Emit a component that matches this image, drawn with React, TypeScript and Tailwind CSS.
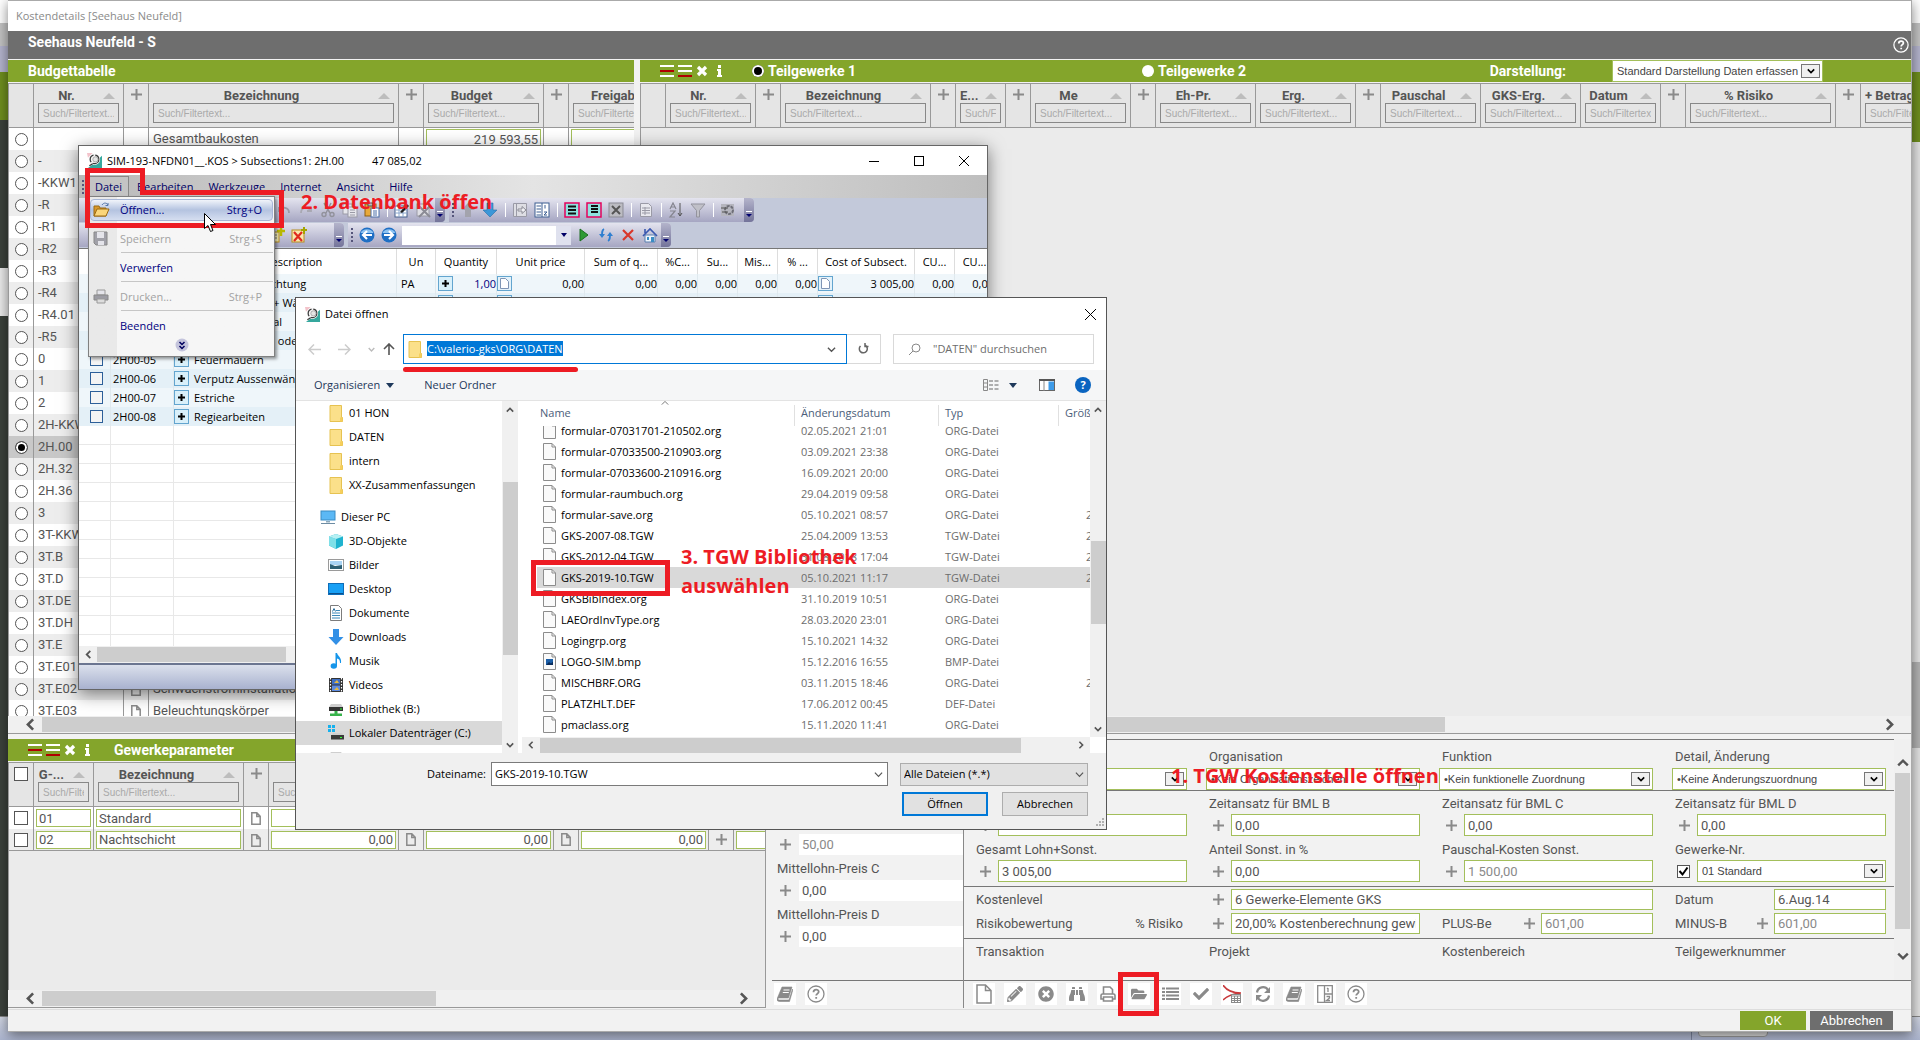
import type { ReactNode } from "react"
import { FaBinoculars, FaCheck, FaFolderOpen, FaPencilAlt, FaTimesCircle } from "react-icons/fa"

type Column = {
    label?: string,
    width: string,
    kind: "select" | "text" | "plus"
}

type FileRow = {
    name: string,
    date: string,
    type: string,
    size?: string
}

const din = "font-[Roboto,sans-serif]"
const segoe = "font-['Open_Sans',sans-serif]"

const budgetColumns: Column[] = [
    { width: "w-[25px]", kind: "select" },
    { label: "Nr.", width: "w-[90px]", kind: "text" },
    { width: "w-[25px]", kind: "plus" },
    { label: "Bezeichnung", width: "w-[250px]", kind: "text" },
    { width: "w-[25px]", kind: "plus" },
    { label: "Budget", width: "w-[120px]", kind: "text" },
    { width: "w-[25px]", kind: "plus" },
    { label: "Freigabe", width: "w-[120px]", kind: "text" },
]

const tradeColumns: Column[] = [
    { width: "w-[25px]", kind: "select" },
    { label: "Nr.", width: "w-[90px]", kind: "text" },
    { width: "w-[25px]", kind: "plus" },
    { label: "Bezeichnung", width: "w-[150px]", kind: "text" },
    { width: "w-[25px]", kind: "plus" },
    { label: "E...", width: "w-[50px]", kind: "text" },
    { width: "w-[25px]", kind: "plus" },
    { label: "Me", width: "w-[100px]", kind: "text" },
    { width: "w-[25px]", kind: "plus" },
    { label: "Eh-Pr.", width: "w-[100px]", kind: "text" },
    { label: "Erg.", width: "w-[100px]", kind: "text" },
    { width: "w-[25px]", kind: "plus" },
    { label: "Pauschal", width: "w-[100px]", kind: "text" },
    { label: "GKS-Erg.", width: "w-[100px]", kind: "text" },
    { label: "Datum", width: "w-[80px]", kind: "text" },
    { width: "w-[25px]", kind: "plus" },
    { label: "% Risiko", width: "w-[150px]", kind: "text" },
    { width: "w-[25px]", kind: "plus" },
    { label: "+ Betrag", width: "w-[80px]", kind: "text" },
]

const paramColumns: Column[] = [
    { width: "w-[25px]", kind: "select" },
    { label: "G-...", width: "w-[60px]", kind: "text" },
    { label: "Bezeichnung", width: "w-[150px]", kind: "text" },
    { width: "w-[25px]", kind: "plus" },
    { label: "%", width: "w-[130px]", kind: "text" },
    { width: "w-[25px]", kind: "plus" },
    { label: "%", width: "w-[130px]", kind: "text" },
    { width: "w-[25px]", kind: "plus" },
    { label: "%", width: "w-[130px]", kind: "text" },
    { width: "w-[25px]", kind: "plus" },
    { label: "%", width: "w-[130px]", kind: "text" },
]

const budgetCodes = ["", "-", "-KKW1", "-R", "-R1", "-R2", "-R3", "-R4", "-R4.01", "-R5", "0", "1", "2", "2H-KKW", "2H.00", "2H.32", "2H.36", "3", "3T-KKW", "3T.B", "3T.D", "3T.DE", "3T.DH", "3T.E", "3T.E01", "3T.E02", "3T.E03"]
const budgetNames: Record<string, string> = {
    "": "Gesamtbaukosten",
    "3T.E02": "Schwachstrominstallation",
    "3T.E03": "Beleuchtungskörper",
}

const subsections = [
    ["2H00-01", "Baustelleneinrichtung"],
    ["2H00-02", "Mauern, Beton + Wände"],
    ["2H00-03", "Regie u. Personal"],
    ["2H00-04", "Mauerwerk neu oder"],
    ["2H00-05", "Feuermauern"],
    ["2H00-06", "Verputz Aussenwände"],
    ["2H00-07", "Estriche"],
    ["2H00-08", "Regiearbeiten"],
]

const subsectionColumns = [
    ["", "w-[32px]"], ["", "w-[63px]"], ["Description", "w-[223px]"], ["Un", "w-[39px]"],
    ["Quantity", "w-[61px]"], ["Unit price", "w-[88px]"], ["Sum of q...", "w-[73px]"], ["%C...", "w-[40px]"],
    ["Su...", "w-[40px]"], ["Mis...", "w-[40px]"], ["% ...", "w-[40px]"], ["Cost of Subsect.", "w-[97px]"],
    ["CU...", "w-[40px]"], ["CU...", "w-[40px]"],
]

const files: FileRow[] = [
    { name: "formular-07031701-210502.org", date: "02.05.2021 21:01", type: "ORG-Datei" },
    { name: "formular-07033500-210903.org", date: "03.09.2021 23:38", type: "ORG-Datei" },
    { name: "formular-07033600-210916.org", date: "16.09.2021 20:00", type: "ORG-Datei" },
    { name: "formular-raumbuch.org", date: "29.04.2019 09:58", type: "ORG-Datei" },
    { name: "formular-save.org", date: "05.10.2021 08:57", type: "ORG-Datei", size: "2" },
    { name: "GKS-2007-08.TGW", date: "25.04.2009 13:53", type: "TGW-Datei", size: "2" },
    { name: "GKS-2012-04.TGW", date: "31.08.2018 17:04", type: "TGW-Datei", size: "2" },
    { name: "GKS-2019-10.TGW", date: "05.10.2021 11:17", type: "TGW-Datei", size: "2" },
    { name: "GKSBibIndex.org", date: "31.10.2019 10:51", type: "ORG-Datei" },
    { name: "LAEOrdInvType.org", date: "28.03.2020 23:01", type: "ORG-Datei" },
    { name: "Logingrp.org", date: "15.10.2021 14:32", type: "ORG-Datei" },
    { name: "LOGO-SIM.bmp", date: "15.12.2016 16:55", type: "BMP-Datei" },
    { name: "MISCHBRF.ORG", date: "03.11.2015 18:46", type: "ORG-Datei", size: "2" },
    { name: "PLATZHLT.DEF", date: "17.06.2012 00:45", type: "DEF-Datei" },
    { name: "pmaclass.org", date: "15.11.2020 11:41", type: "ORG-Datei" },
]

/* ---------- small drawings ---------- */

function Plus() {
    return (
        <svg width="11" height="11" viewBox="0 0 11 11" className="shrink-0">
            <path d="M5.5 0v11M0 5.5h11" stroke="#8a8a8a" strokeWidth="2" />
        </svg>
    )
}

function PageOutline() {
    return (
        <svg width="10" height="13" viewBox="0 0 10 13" className="inline-block">
            <path d="M.8.8h5l3.4 3.6v7.8H.8zM5.8.8v3.6h3.4" fill="none" stroke="#8a8a8a" strokeWidth="1.5" />
        </svg>
    )
}

function SortMark() {
    return (
        <svg width="12" height="6" viewBox="0 0 12 6" className="shrink-0"><path d="M0 6l6-6 6 6z" fill="#bdbdbd" /></svg>
    )
}

function Chevron({ dir, size = 10, color = "#555", weight = 2 }: { dir: "left" | "right" | "up" | "down", size?: number, color?: string, weight?: number }) {
    const d = { left: "M7 1L3 5l4 4", right: "M3 1l4 4-4 4", up: "M1 7l4-4 4 4", down: "M1 3l4 4 4-4" }[dir]
    return (
        <svg width={size} height={size} viewBox="0 0 10 10" className="shrink-0">
            <path d={d} fill="none" stroke={color} strokeWidth={weight} />
        </svg>
    )
}

function AppIcon() {
    return (
        <svg width="15" height="15" viewBox="0 0 16 16" className="shrink-0">
            <path d="M16 3v13H1l4-3z" fill="#35a79d" />
            <path d="M0 0h6L1 5z" fill="#f3c3cb" />
            <circle cx="8" cy="6.800" r="6" fill="#f4f4f4" />
            <circle cx="8" cy="6.800" r="4.600" fill="none" stroke="#3a3a3a" strokeWidth="1.300" strokeDasharray="9 2" />
            <circle cx="9" cy="6.800" r="2.800" fill="#e4e4e4" stroke="#999" strokeWidth=".8" />
            <path d="M2.500 13.500L6 11.500" stroke="#333" strokeWidth="1.300" />
        </svg>
    )
}

function FileIcon({ image }: { image?: boolean }) {
    return (
        <svg width="13" height="17" viewBox="0 0 13 17" className="shrink-0">
            <path d="M.5.5h8.5l3.5 3.5v12.5H.5z" fill="#fafafa" stroke="#8c8c8c" />
            <path d="M9 .5v3.5h3.5" fill="none" stroke="#8c8c8c" />
            {image && <path d="M3 6h7v6H3z" fill="#1c5fa8" />}
            {image && <path d="M3 12l3-3 2 1.500 2-2V12z" fill="#0b2d5c" />}
        </svg>
    )
}

function FolderIcon() {
    return (
        <svg width="14" height="17" viewBox="0 0 14 17" className="shrink-0">
            <path d="M1 .5h11.500v12h1v4H1z" fill="#fbe08a" stroke="#e6c251" />
            <path d="M11 12.500h2.500v4H11z" fill="#f6cf5c" />
        </svg>
    )
}

const treeIcons: Record<string, ReactNode> = {
    pc: <><rect x="1" y="2" width="14" height="9" fill="#5bb8f5" stroke="#3a8cc4" /><path d="M6 12h4v1.500H6z" fill="#8fa9bb" /><path d="M1 14.500h14" stroke="#6d8ca3" /></>,
    cube: <><path d="M8 1l7 2.500v9L8 16l-7-3.500v-9z" fill="#1fb3cf" /><path d="M1 3.500L8 6v10l-7-3.500z" fill="#7fe0e8" /><path d="M1 3.500L8 1l7 2.500L8 6z" fill="#b6f0f3" /></>,
    image: <><rect x=".5" y="2.500" width="15" height="11" fill="#fff" stroke="#9a9a9a" /><path d="M2 4h12v4H2z" fill="#a9d3f3" /><path d="M2 7l5 2 7-1v4H2z" fill="#2d5f73" /></>,
    desktop: <><rect x=".5" y="2.500" width="15" height="11" fill="#18a0f5" stroke="#0f6db8" /><path d="M1 12.500h14" stroke="#0b4f8c" /></>,
    doc: <><path d="M2.500.5h8l3 3v12h-11z" fill="#fff" stroke="#7c7c7c" /><path d="M4 8h8M4 10.500h8M4 13h8M8 5.500h4" stroke="#3c88b8" /><path d="M4.500 6.500l1.500-3 1.500 3" stroke="#2a6e9c" fill="none" /></>,
    download: <path d="M5 0h6v8h4.500L8 16 .5 8H5z" fill="#3290e6" />,
    music: <><path d="M7.500 0h1.500c.5 3 5 4.500 4 10h-1c0-3-1-4-3-4.500V13H7.500z" fill="#1595ea" /><ellipse cx="5.800" cy="13" rx="3.200" ry="2.800" fill="#1595ea" /></>,
    video: <><rect x="1" y="1" width="14" height="14" fill="#333" /><path d="M4 2h8v5.500H4z" fill="#3f6fc4" /><path d="M4 8.500h8V14H4z" fill="#5d8be0" /><path d="M6 6l3-3 2 3zM6 13l3-3 2 3z" fill="#e7b83c" /><path d="M2.500 1v14M13.500 1v14" stroke="#fff" strokeDasharray="1.500 1.500" strokeWidth="1.200" /></>,
    net: <><path d="M3 3h10l2 3H1z" fill="#cfcfcf" /><rect x="1" y="6" width="14" height="4" fill="#333" /><path d="M12 8h2" stroke="#3f3" /><path d="M6.500 10h3v2.500h4.500V15H2v-2.500h4.500z" fill="#37b34a" /></>,
    disk: <><path d="M0 0h3v3H0zM4 0h3v3H4zM0 4h3v3H0zM4 4h3v3H4z" fill="#16b1ee" /><path d="M5 8h9l2 3H3z" fill="#cfcfcf" /><rect x="3" y="10" width="13" height="4.500" fill="#3a3a3a" /><path d="M12 12.500h2" stroke="#3f3" /></>,
}

function TreeIcon({ name }: { name: string }) {
    if (name === "folder") return <FolderIcon />
    return <svg width="16" height="16" viewBox="0 0 16 16" className="shrink-0">{treeIcons[name]}</svg>
}

const toolIcons: Record<string, ReactNode> = {
    undo: <path d="M3 5v4h4M3 9c3-5 10-4 10 2" fill="none" stroke="#9a9aa6" strokeWidth="1.800" />,
    redo: <path d="M13 5v4H9M13 9C10 4 3 5 3 11" fill="none" stroke="#a8a8b2" strokeWidth="1.800" />,
    cut: <><path d="M4 1l6 10M11 1L6 11" stroke="#92929c" strokeWidth="1.500" /><circle cx="4" cy="12.500" r="2" fill="none" stroke="#92929c" strokeWidth="1.400" /><circle cx="12" cy="12.500" r="2" fill="none" stroke="#92929c" strokeWidth="1.400" /></>,
    copy: <><rect x="1" y="2" width="9" height="10" fill="#e6e6ec" stroke="#9a9aa6" /><rect x="6" y="5" width="9" height="10" fill="#e6e6ec" stroke="#9a9aa6" /><path d="M8 8h5M8 10.500h5M8 13h5" stroke="#9a9aa6" /></>,
    paste: <><rect x="1" y="2" width="11" height="12" fill="#e8a93a" stroke="#8d5f13" /><rect x="4" y="1" width="5" height="3" fill="#b9b9c4" stroke="#555" /><rect x="7" y="6" width="8" height="9" fill="#fff" stroke="#4a6ea8" /><path d="M9 9h4M9 11h4M9 13h4" stroke="#4a6ea8" /></>,
    edit: <><rect x="1" y="4" width="12" height="11" fill="#fff" stroke="#46618d" /><path d="M1 8h12M1 11h12M5 4v11M9 4v11" stroke="#8aa6cc" /><path d="M6 10l7-8 2 2-7 7z" fill="#222" /></>,
    gridx: <><rect x="1" y="2" width="12" height="12" fill="#dedee4" stroke="#9a9aa6" /><path d="M3 4l11 11M14 4L3 15" stroke="#8b8b95" strokeWidth="2" /></>,
    up: <path d="M8 1l7 7h-4v7H5V8H1z" fill="#a3a3ad" />,
    down: <path d="M8 15L1 8h4V1h6v7h4z" fill="#3b97d8" stroke="#2b6fa8" strokeWidth=".6" />,
    jump: <><path d="M1.500 1.500h13v13h-13z" fill="#dedee4" stroke="#9a9aa6" /><path d="M4.500 2v12" stroke="#9a9aa6" /><path d="M6 7h4V4.500L14 8l-4 3.500V9H6z" fill="#f1f1f5" stroke="#8b8b95" /></>,
    list12: <><rect x="1" y="1" width="14" height="14" fill="#fff" stroke="#3c5f92" /><path d="M8 1v14" stroke="#3c5f92" /><path d="M2.500 4H7M2.500 7H7M2.500 10H7M2.500 13H7M11 3v3.500M10 10h3l-3 3h3" stroke="#3c5f92" fill="none" /></>,
    pinkTop: <><rect x="1" y="1" width="14" height="14" fill="#8fe3df" stroke="#e6005c" strokeWidth="1.500" /><path d="M4 4.500h8M4 8h8M4 11.500h8" stroke="#111" strokeWidth="1.800" /></>,
    pinkBottom: <><rect x="1" y="1" width="14" height="14" fill="#8fe3df" stroke="#e6005c" strokeWidth="1.500" /><path d="M5 4h7M5 7h7M5 10h7" stroke="#111" strokeWidth="1.800" /></>,
    boxx: <><rect x="1" y="1" width="14" height="14" fill="#bcbcc2" stroke="#8b8b95" /><path d="M4 4l8 8M12 4l-8 8" stroke="#555" strokeWidth="2" /></>,
    sheet: <><path d="M2.500 1.500h8l3 3v10h-11z" fill="#e8e8ee" stroke="#9a9aa6" /><path d="M4 6h8M4 8.500h8M4 11h8M7 5v8" stroke="#9a9aa6" /></>,
    sort: <><path d="M2 7l3-6 3 6M3 5h4M2 9h5l-5 6h5" fill="none" stroke="#85858f" strokeWidth="1.200" /><path d="M12 1v13M10 11l2 3 2-3" stroke="#555" fill="none" /></>,
    funnel: <path d="M1 2h14L9.500 8.500V15h-3V8.500z" fill="#c0c0c8" stroke="#93939d" />,
    gear: <><rect x="1" y="2" width="13" height="12" fill="#b5b5be" /><circle cx="9" cy="8" r="4" fill="none" stroke="#6f6f79" strokeWidth="2" strokeDasharray="3 1" /><path d="M1 6h7M2 10h6" stroke="#555" /></>,
    docplus: <><rect x="1" y="5" width="9" height="10" fill="#f7f0b8" stroke="#b78d1c" /><path d="M3 8h5M3 11h5" stroke="#777" /><path d="M12 0v9M8 4h8" stroke="#b8b800" strokeWidth="2.500" /></>,
    xplus: <><rect x="1" y="3" width="12" height="12" fill="#fbe6b0" stroke="#b78d1c" /><path d="M3 5l8 9M11 5l-8 9" stroke="#e02a1e" strokeWidth="2.200" /><path d="M13 0v7M10 3h6" stroke="#a5a500" strokeWidth="2" /></>,
    back: <><circle cx="8" cy="8" r="7.500" fill="#1f6fc4" /><path d="M1.500 6a7 6 0 0113 0z" fill="#8cc3f2" /><path d="M13 8H4M8 4L4 8l4 4" fill="none" stroke="#fff" strokeWidth="2.200" /></>,
    forward: <><circle cx="8" cy="8" r="7.500" fill="#1f6fc4" /><path d="M1.500 6a7 6 0 0113 0z" fill="#8cc3f2" /><path d="M3 8h9M8 4l4 4-4 4" fill="none" stroke="#fff" strokeWidth="2.200" /></>,
    play: <path d="M4 2l8 6-8 6z" fill="#2f9a35" stroke="#1d6e22" />,
    refresh: <><path d="M6 2C4 3 4 5 4 9M10 14c2-1 2-3 2-7" fill="none" stroke="#2f7fd0" strokeWidth="1.800" /><path d="M1 7h6l-3 4zM9 9h6l-3-4z" fill="#2f7fd0" /></>,
    redx: <path d="M3 3l10 10M13 3L3 13" stroke="#d9372b" strokeWidth="2.200" />,
    home: <><path d="M3 8h10v7H3z" fill="#eef4fb" stroke="#5b7fae" /><path d="M1 9l7-7 7 7M3 2v4" fill="none" stroke="#3a58b0" strokeWidth="1.600" /><path d="M5 10h2v3H5zM9 10h3v5H9z" fill="#3a8cc4" /></>,
}

function ToolButton({ name }: { name: string }) {
    if (name === "|") {
        return <span className="flex w-2 justify-center"><span className="h-3.5 w-px bg-white" /></span>
    }
    return (
        <button aria-label={name} className="flex h-5 w-[22px] items-center justify-center">
            <svg width="16" height="16" viewBox="0 0 16 16">{toolIcons[name]}</svg>
        </button>
    )
}

function Grip() {
    return (
        <svg width="8" height="16" viewBox="0 0 8 16" className="shrink-0">
            <path d="M4 1v14" stroke="#55557a" strokeWidth="2" strokeDasharray="2 2" />
        </svg>
    )
}

function ToolStrip({ width, children, className = "" }: { width: string, children: ReactNode, className?: string }) {
    return (
        <div className={`flex h-6 overflow-hidden rounded-r bg-gradient-to-b from-[#e4e4ef] to-[#a6a6c2] ${width}`}>
            <div className={`flex min-w-0 flex-1 items-center ${className}`}><Grip />{children}</div>
            <div className="flex w-2.5 shrink-0 items-end justify-center bg-gradient-to-b from-[#b4b4cb] to-[#74749a] pb-1">
                <svg width="6" height="7" viewBox="0 0 6 7"><path d="M0 .5h6" stroke="#fff" /><path d="M0 3h6L3 6z" fill="#00006e" /></svg>
            </div>
        </div>
    )
}

/* ---------- cost details ---------- */

function HeaderRow({ columns, checkbox }: { columns: Column[], checkbox?: boolean }) {
    return (
        <tr className="h-[45px] bg-[#e5e5e5]">
            {columns.map((col, i) => (
                <th key={i} className={`overflow-hidden border-y border-r border-[#999] p-0 align-top font-bold ${col.width}`}>
                    {col.kind === "select" && checkbox && (
                        <input type="checkbox" aria-label="Alle" className="m-1 size-3.5 appearance-none border border-[#555] bg-white" />
                    )}
                    {col.kind === "plus" && (
                        <button aria-label="Spalte" className="mt-[5px] p-0"><Plus /></button>
                    )}
                    {col.kind === "text" && (
                        <div className="flex flex-col px-1">
                            <div className="flex h-[19px] items-center gap-2 pt-1 pr-1">
                                <span className="min-w-0 flex-1 text-center text-[13px] leading-4 whitespace-nowrap text-[#555]">{col.label}</span>
                                <SortMark />
                            </div>
                            <input aria-label={`Filter ${col.label}`} placeholder="Such/Filtertext..." className="h-5 w-full border border-[#888] bg-transparent px-1 font-['Liberation_Sans',sans-serif] text-[10px] font-normal placeholder:text-[#aaa]" />
                        </div>
                    )}
                </th>
            ))}
        </tr>
    )
}

function RowMarks() {
    return (
        <div className="flex items-center gap-1 pr-4">
            <svg width="14" height="12" viewBox="0 0 14 12"><path d="M0 1h14M0 11h14" stroke="#fff" strokeWidth="2" /><path d="M0 6h14" stroke="#b00000" strokeWidth="2" /></svg>
            <svg width="14" height="12" viewBox="0 0 14 12"><path d="M0 1h14M0 6h14" stroke="#fff" strokeWidth="2" /><path d="M0 11h14" stroke="#b00000" strokeWidth="2" /></svg>
            <svg width="12" height="12" viewBox="0 0 12 12"><path d="M2 2l8 8M10 2l-8 8" stroke="#fff" strokeWidth="3.200" /></svg>
            <svg width="14" height="12" viewBox="0 0 14 12"><path d="M6 0h3v3H6zM5 4h4v6h1v2H5v-2h1V6H5z" fill="#fff" /></svg>
        </div>
    )
}

function ScrollX({ thumb }: { thumb: string }) {
    return (
        <div className="flex h-[17px] shrink-0 items-center bg-[#f0f0f0]">
            <div className="flex w-[34px] justify-end pr-[5px]"><Chevron dir="left" size={13} /></div>
            <div className="flex h-[15px] flex-1"><div className={`bg-[#cdcdcd] ${thumb}`} /></div>
            <div className="flex w-8 justify-start pl-1"><Chevron dir="right" size={13} /></div>
        </div>
    )
}

function Dropdown({ value, label, className = "" }: { value: string, label: string, className?: string }) {
    return (
        <div className={`relative ${className}`}>
            <select aria-label={label} className="h-[22px] w-full appearance-none border border-[#a3bf5b] bg-white pl-1 pr-5 font-['Liberation_Sans',sans-serif] text-[11px] font-normal text-[#444]">
                <option>{value}</option>
            </select>
            <span className="pointer-events-none absolute top-1 right-[3px] flex h-3.5 w-[19px] items-center justify-center border border-[#777] bg-[#f0f0f0]">
                <Chevron dir="down" size={8} color="#000" />
            </span>
        </div>
    )
}

function Field({ label, value, muted }: { label: string, value: string, muted?: boolean }) {
    return (
        <label className="flex flex-col">
            <span className="h-[21px] pl-[3px] leading-[21px]">{label}</span>
            <span className="flex items-center">
                <span className="flex w-[25px] justify-center"><Plus /></span>
                <input defaultValue={value} className={`h-[22px] min-w-0 flex-1 border border-[#a3bf5b] bg-white px-[3px] ${muted ? "text-[#8a8a8a]" : ""}`} />
            </span>
        </label>
    )
}

function BudgetTable() {
    return (
        <div className="flex w-[626px] shrink-0 flex-col border-b border-[#999]">
            <h2 className="flex h-[23px] shrink-0 items-center border-b border-[#f2f2f2] bg-[#84a52b] pl-5 text-sm font-bold text-white">Budgettabelle</h2>
            <div className="min-h-0 flex-1 overflow-hidden border-l border-[#999]">
                <table className="w-0 table-fixed border-separate border-spacing-0">
                    <thead><HeaderRow columns={budgetColumns} /></thead>
                    <tbody>
                        {budgetCodes.map((code, i) => {
                            const selected = code === "2H.00"
                            return (
                                <tr key={code} className={`h-[22px] text-[#555] ${selected ? "bg-[#c8c8c8]" : i % 2 ? "bg-[#ededed]" : "bg-white"}`}>
                                    <td className="border-r border-[#999] p-0 text-center">
                                        <input type="radio" name="budget" aria-label={code || "Gesamt"} defaultChecked={selected} className="mx-auto block size-[13px] appearance-none rounded-full border border-[#555] bg-white checked:border-[#555] checked:bg-black checked:shadow-[inset_0_0_0_2px_white]" />
                                    </td>
                                    <td className="overflow-hidden border-r border-[#999] p-0 pl-1 whitespace-nowrap">{code}</td>
                                    <td className="border-r border-[#999] p-0 text-center">{i > 0 && <PageOutline />}</td>
                                    <td className="overflow-hidden border-r border-[#999] p-0 pl-1 whitespace-nowrap">{budgetNames[code]}</td>
                                    <td className="border-r border-[#999] p-0" />
                                    <td className="border-r border-[#999] p-0 px-0.5">
                                        {i === 0 && <input aria-label="Budget" defaultValue="219 593,55" className="block h-5 w-full border border-[#a3bf5b] bg-white px-0.5 text-right" />}
                                    </td>
                                    <td className="border-r border-[#999] p-0" />
                                    <td className="p-0 px-0.5">
                                        {i === 0 && <input aria-label="Freigabe" className="block h-5 w-full border border-[#a3bf5b] bg-white" />}
                                    </td>
                                </tr>
                            )
                        })}
                    </tbody>
                </table>
            </div>
            <ScrollX thumb="w-4/5" />
        </div>
    )
}

function TradeTable() {
    return (
        <div className="flex min-w-0 flex-1 flex-col border-b border-[#999]">
            <div className="flex h-[23px] shrink-0 items-center border-b border-[#f2f2f2] bg-[#84a52b] pl-5 text-sm font-bold text-white">
                <RowMarks />
                <label className="flex w-[390px] items-center gap-1">
                    <input type="radio" name="trade" defaultChecked className="ml-2.5 size-3 appearance-none rounded-full bg-white checked:bg-black checked:shadow-[inset_0_0_0_2px_white]" />
                    Teilgewerke 1
                </label>
                <label className="flex items-center gap-1">
                    <input type="radio" name="trade" className="ml-2.5 size-3 appearance-none rounded-full bg-white" />
                    Teilgewerke 2
                </label>
                <span className="ml-auto">Darstellung:</span>
                <Dropdown label="Darstellung" value="Standard Darstellung Daten erfassen" className="mr-[88px] ml-[46px] w-[211px]" />
            </div>
            <div className="min-h-0 flex-1 overflow-hidden border-l border-[#999] bg-[#ebebeb]">
                <table className="w-0 table-fixed border-separate border-spacing-0">
                    <thead><HeaderRow columns={tradeColumns} /></thead>
                </table>
            </div>
            <ScrollX thumb="w-[64%]" />
        </div>
    )
}

function ParamTable() {
    const cell = "block h-[18px] w-full border border-[#a3bf5b] bg-white px-0.5"
    return (
        <div className="flex w-[758px] shrink-0 flex-col border-r border-b border-[#999]">
            <div className="flex h-[23px] shrink-0 items-center border-b border-[#f2f2f2] bg-[#84a52b] pl-5 text-sm font-bold text-white">
                <RowMarks />
                <h2 className="pl-1">Gewerkeparameter</h2>
            </div>
            <div className="min-h-0 flex-1 overflow-hidden border-l border-[#999] bg-[#ebebeb]">
                <table className="w-0 table-fixed border-separate border-spacing-0">
                    <thead><HeaderRow columns={paramColumns} checkbox /></thead>
                    <tbody>
                        {[["01", "Standard"], ["02", "Nachtschicht"]].map(([nr, name], i) => (
                            <tr key={nr} className={`h-[22px] *:border-r *:border-[#999] *:p-0 ${i ? "bg-[#ededed] *:border-b" : "bg-white"}`}>
                                <td>
                                    <input type="checkbox" aria-label={nr} className="mx-auto block size-3.5 appearance-none border border-[#555] bg-white" />
                                </td>
                                <td><div className="px-0.5"><input aria-label="Nummer" defaultValue={nr} className={cell} /></div></td>
                                <td><div className="px-0.5"><input aria-label="Bezeichnung" defaultValue={name} className={cell} /></div></td>
                                <td className="text-center"><PageOutline /></td>
                                {["A", "B", "C", "D"].map((k) => [
                                    <td key={k}><div className="px-0.5"><input aria-label={k} defaultValue="0,00" className={`${cell} text-right`} /></div></td>,
                                    k !== "D" && <td key={k + "+"} className="text-center"><span className="flex justify-center">{k === "C" ? <Plus /> : <PageOutline />}</span></td>,
                                ])}
                            </tr>
                        ))}
                    </tbody>
                </table>
            </div>
            <ScrollX thumb="w-[57%]" />
        </div>
    )
}

const formIcons: Record<string, ReactNode> = {
    Neu: <svg width="16" height="20" viewBox="0 0 16 20"><path d="M1 1h8.500L15 6.500V19H1zM9.500 1v5.500H15" fill="none" stroke="#8a8a8a" strokeWidth="1.500" /></svg>,
    Bearbeiten: <FaPencilAlt />,
    Entfernen: <FaTimesCircle />,
    Suchen: <FaBinoculars />,
    Drucken: <svg width="16" height="16" viewBox="0 0 16 16"><path d="M3.500 8V1h6.500l2.500 2.500V8M3 13H1V9.500Q1 8 2.500 8h11Q15 8 15 9.500V13h-2M3.500 11h9v4h-9z" fill="none" stroke="#8a8a8a" strokeWidth="1.600" /></svg>,
    Öffnen: <FaFolderOpen />,
    Liste: <svg width="17" height="14" viewBox="0 0 17 14"><path d="M0 1.500h3M4 1.500h13M0 5h3M4 5h13M0 8.500h3M4 8.500h13M0 12h3M4 12h13" stroke="#8a8a8a" strokeWidth="2.200" /></svg>,
    Übernehmen: <FaCheck />,
    Berechnen: <svg width="18" height="18" viewBox="0 0 18 18"><path d="M0 0c4 6 9 8 18 8M0 15c4-4 8-6 18-7" fill="none" stroke="#c8393c" strokeWidth="1.600" /><rect x="8.500" y="9.500" width="9" height="8" fill="#fff" stroke="#8a8a8a" /><path d="M9 11h8M9 13.500h8M9 15.500h8M11.500 11v6M14.500 11v6" stroke="#8a8a8a" /></svg>,
    Aktualisieren: <svg width="16" height="16" viewBox="0 0 16 16"><path d="M2 6.500A6 6 0 0113 4M14 9.500A6 6 0 013 12" fill="none" stroke="#8a8a8a" strokeWidth="2.200" /><path d="M15 1v6H9zM1 15V9h6z" fill="#8a8a8a" /></svg>,
    Buch: <svg width="16" height="16" viewBox="0 0 16 16"><path d="M5 1h10l-3.500 11H2q-1.500 0-1 1.200.3.800 1.500.8H12l3.500-11v2L12.500 15.500H2.500Q0 15.500 0 13z" fill="#8a8a8a" stroke="#8a8a8a" strokeWidth=".6" /><path d="M6.500 4h6M5.800 6.500h6" stroke="#fff" strokeWidth="1.100" /></svg>,
    Nummern: <svg width="16" height="18" viewBox="0 0 16 18"><path d="M.7.7h14.600v16.600H.7zM7.500.7v16.600M7.500 9h8M11 3v4M10 3.700l1-.7M9.500 11.500h3V13l-3 2.500h3.500" fill="none" stroke="#8a8a8a" strokeWidth="1.300" /></svg>,
    Hilfe: <svg width="18" height="18" viewBox="0 0 18 18"><circle cx="9" cy="9" r="8" fill="none" stroke="#8a8a8a" strokeWidth="1.300" /><path d="M6.500 7.200c0-3.500 5.200-3.400 5.200-.4 0 1.700-2.500 1.900-2.500 3.800M9.200 12v1.800" fill="none" stroke="#8a8a8a" strokeWidth="1.800" /></svg>,
}

function IconBar({ names, className }: { names: string[], className: string }) {
    return (
        <div className={`flex h-[28px] shrink-0 items-center gap-[9px] border-t border-[#777] pb-0.5 ${className}`}>
            {names.map((name) => (
                <button key={name} aria-label={name} className="flex size-[22px] items-center justify-center bg-white text-base text-[#8a8a8a]">{formIcons[name]}</button>
            ))}
        </div>
    )
}

function WagePanel() {
    return (
        <div className="flex w-[198px] shrink-0 flex-col border-r border-[#888] pl-1.5">
            <div className="flex flex-1 flex-col pt-[26px]">
                {[["A", "50,00"], ["B", "50,00"], ["C", "0,00"], ["D", "0,00"]].map(([k, value]) => (
                    <label key={k} className="flex h-[46px] flex-col">
                        <span className="pl-[5px] leading-[23px]">Mittellohn-Preis {k}</span>
                        <span className="flex items-center">
                            <span className="flex w-[27px] justify-center"><Plus /></span>
                            <input defaultValue={value} className={`h-[21px] min-w-0 flex-1 bg-white px-[3px] ${k < "C" ? "text-[#8a8a8a]" : ""}`} />
                        </span>
                    </label>
                ))}
            </div>
            <IconBar className="pl-0.5" names={["Buch", "Hilfe"]} />
        </div>
    )
}

function CostForm() {
    const box = "h-[21px] min-w-0 border border-[#a3bf5b] bg-white px-[3px]"
    return (
        <div className="flex min-w-0 flex-1 flex-col">
            <div className="flex flex-1">
                <div className="min-w-0 flex-1 border-t border-[#777]">
                    <div className="grid grid-cols-4 gap-x-[19px] border-b border-[#777] pt-1.5 pr-2 pl-[9px]">
                        {[["Standort", "•Kein Standort"], ["Organisation", "•Kein Organisationszeichen"], ["Funktion", "•Kein funktionelle Zuordnung"], ["Detail, Änderung", "•Keine Änderungszuordnung"]].map(([label, value]) => (
                            <div key={label}>
                                <div className="pl-[3px] leading-[22px]">{label}</div>
                                <Dropdown label={label} value={value} />
                            </div>
                        ))}
                    </div>
                    <div className="grid grid-cols-4 gap-x-[19px] gap-y-[3px] border-b border-[#777] pt-0.5 pr-2 pb-1 pl-[9px]">
                        <Field label="Zeitansatz für BML A" value="" />
                        <Field label="Zeitansatz für BML B" value="0,00" />
                        <Field label="Zeitansatz für BML C" value="0,00" />
                        <Field label="Zeitansatz für BML D" value="0,00" />
                        <Field label="Gesamt Lohn+Sonst." value="3 005,00" />
                        <Field label="Anteil Sonst. in %" value="0,00" />
                        <Field label="Pauschal-Kosten Sonst." value="1 500,00" muted />
                        <div>
                            <div className="pl-[3px] leading-[21px]">Gewerke-Nr.</div>
                            <div className="flex items-center">
                                <span className="flex w-[25px] pl-[5px]">
                                    <input type="checkbox" aria-label="Gewerke" defaultChecked className="size-[13px] appearance-none border border-[#555] bg-white" />
                                    <svg width="13" height="13" viewBox="0 0 13 13" className="pointer-events-none -ml-[13px]"><path d="M2.500 6l3 3.500 5-7" fill="none" stroke="#000" strokeWidth="2" /></svg>
                                </span>
                                <Dropdown label="Gewerke-Nr." value="01 Standard" className="flex-1" />
                            </div>
                        </div>
                    </div>
                    <div className="grid grid-cols-4 items-center gap-x-[19px] gap-y-[3px] border-b border-[#777] pt-0.5 pr-2 pb-1 pl-[9px]">
                        <label htmlFor="level" className="pl-[3px]">Kostenlevel</label>
                        <div className="col-span-2 flex items-center">
                            <span className="flex w-[25px] justify-center"><Plus /></span>
                            <input id="level" defaultValue="6 Gewerke-Elemente GKS" className={`${box} flex-1`} />
                        </div>
                        <label className="flex items-center justify-between pl-[3px]">Datum<input defaultValue="6.Aug.14" className={`${box} w-[112px]`} /></label>
                        <div className="flex justify-between pl-[3px]"><span>Risikobewertung</span><span className="pr-1">% Risiko</span></div>
                        <div className="flex items-center">
                            <span className="flex w-[25px] justify-center"><Plus /></span>
                            <input aria-label="Risikobewertung" defaultValue="20,00% Kostenberechnung gewichtet" className={`${box} flex-1`} />
                        </div>
                        <label className="flex items-center pl-[3px]"><span className="flex-1">PLUS-Be</span><Plus /><input defaultValue="601,00" className={`${box} ml-1.5 w-[112px] text-[#8a8a8a]`} /></label>
                        <label className="flex items-center pl-[3px]"><span className="flex-1">MINUS-B</span><Plus /><input defaultValue="601,00" className={`${box} ml-1.5 w-[112px] text-[#8a8a8a]`} /></label>
                    </div>
                    <div className="grid grid-cols-4 gap-x-[19px] pr-2 pl-[9px] leading-[26px]">
                        {["Transaktion", "Projekt", "Kostenbereich", "Teilgewerknummer"].map((label) => <span key={label} className="pl-[3px]">{label}</span>)}
                    </div>
                </div>
                <div className="flex w-[17px] shrink-0 flex-col items-center bg-[#f0f0f0] py-3.5">
                    <div className="flex h-5 items-center"><Chevron dir="up" size={12} /></div>
                    <div className="w-[15px] flex-1"><div className="h-[90%] bg-[#cdcdcd]" /></div>
                    <div className="flex h-5 items-center"><Chevron dir="down" size={12} /></div>
                </div>
            </div>
            <IconBar className="pl-[9px]" names={["Neu", "Bearbeiten", "Entfernen", "Suchen", "Drucken", "Öffnen", "Liste", "Übernehmen", "Berechnen", "Aktualisieren", "Buch", "Nummern", "Hilfe"]} />
        </div>
    )
}

function CostDetails() {
    return (
        <section className={`absolute inset-x-2 top-0 bottom-2 flex flex-col border-t border-r border-b border-[#aaa] bg-[#f2f2f2] text-[13px] leading-4 text-[#555] shadow-[0_3px_12px_rgba(0,0,0,0.5)] ${din}`}>
            <div className={`flex h-[30px] shrink-0 items-center bg-white pl-2 text-[11px] text-[#8a8a8a] ${segoe}`}>Kostendetails [Seehaus Neufeld]</div>
            <header className="mb-px flex h-7 shrink-0 items-center justify-between bg-[#6e6e6e] pr-0.5 pl-5 text-white">
                <h1 className="pb-1.5 text-sm font-bold">Seehaus Neufeld - S</h1>
                <svg width="16" height="16" viewBox="0 0 18 18"><circle cx="9" cy="9" r="8" fill="none" stroke="#fff" strokeWidth="1.400" /><path d="M6.500 7.200c0-3.500 5.200-3.400 5.200-.4 0 1.700-2.500 1.900-2.500 3.800M9.200 12v1.800" fill="none" stroke="#fff" strokeWidth="2" /></svg>
            </header>
            <div className="flex min-h-0 flex-1 gap-1.5">
                <BudgetTable />
                <TradeTable />
            </div>
            <div className="mt-[5px] mb-px flex h-[269px] shrink-0">
                <ParamTable />
                <WagePanel />
                <CostForm />
            </div>
            <footer className="flex h-[22px] shrink-0 items-center justify-end gap-1 border-t border-[#ddd] pr-[18px] text-white">
                <button className="h-[19px] w-[66px] bg-[#84a52b]">OK</button>
                <button className="h-[19px] w-[83px] bg-[#6e6e6e]">Abbrechen</button>
            </footer>
        </section>
    )
}

/* ---------- subsections window ---------- */

function FileMenu() {
    const items = [["Öffnen...", "Strg+O"], ["Speichern", "Strg+S"], ["Verwerfen", ""], ["Drucken...", "Strg+P"], ["Beenden", ""]]
    return (
        <div className="absolute top-[50px] left-[9px] flex w-[187px] flex-col gap-1 border border-[#808080] bg-gradient-to-r from-[#e9e9e9] from-15% to-[#f6f6f6] to-15% px-px pb-1 shadow-[2px_2px_3px_rgba(0,0,0,0.4)]">
            {items.map(([label, keys], i) => {
                const disabled = i === 1 || i === 3
                return (
                    <button key={label} className={`relative flex h-[25px] items-center text-left ${disabled ? "text-[#a3a3a3]" : "text-[#000080]"}`}>
                        <span className={`flex h-[22px] w-full items-center rounded border pr-2.5 ${i === 0 ? "border-[#a7b6d6] bg-gradient-to-b from-[#f1f4fa] via-[#b4c3e0] to-[#d5def0]" : "border-transparent"}`}>
                            <span className="flex w-[29px] shrink-0 pl-0.5">
                                {i === 0 && <svg width="17" height="16" viewBox="0 0 17 16"><path d="M1 4h5l1 2h6v8H1z" fill="#d9982b" stroke="#9b6a12" /><path d="M4 7h12l-3 7H1z" fill="#fbd67a" stroke="#9b6a12" /><path d="M9 3c2-3 5-2 6 0m0-2v2.500h-2.500" fill="none" stroke="#5577aa" /></svg>}
                                {i === 1 && <svg width="15" height="15" viewBox="0 0 15 15"><path d="M1 1h13v13H3l-2-2z" fill="#a0a0a8" stroke="#888" /><path d="M4 1h7v6H4zM5 10h6v4H5z" fill="#e4e4ea" /></svg>}
                                {i === 3 && <svg width="16" height="15" viewBox="0 0 16 15"><path d="M4 1h8v5H4z" fill="#e4e4ea" stroke="#999" /><path d="M1 6h14v5H1z" fill="#9c9ca4" stroke="#888" /><path d="M4 10h8v4H4z" fill="#ddd" stroke="#999" /></svg>}
                            </span>
                            <span className="flex-1">{label}</span>
                            <span>{keys}</span>
                        </span>
                        {i > 0 && i < 4 && <span className="absolute right-0 -bottom-0.5 left-[31px] h-px bg-[#c6c6c6]" />}
                    </button>
                )
            })}
            <div className="-mt-1 flex h-3.5 justify-center">
                <svg width="14" height="14" viewBox="0 0 14 14"><circle cx="7" cy="7" r="6.500" fill="#c4c4dc" /><path d="M4.500 4L7 6.500 9.500 4M4.500 8L7 10.500 9.500 8" fill="none" stroke="#00005e" strokeWidth="1.500" /></svg>
            </div>
        </div>
    )
}

function CellPlus() {
    return (
        <svg width="15" height="15" viewBox="0 0 15 15" className="shrink-0"><rect x=".5" y=".5" width="14" height="14" fill="#d9f0fa" stroke="#63a5cf" /><path d="M7.500 4v7M4 7.500h7" stroke="#000" strokeWidth="2" /></svg>
    )
}

function CellPage() {
    return (
        <svg width="15" height="15" viewBox="0 0 15 15" className="shrink-0"><rect x=".5" y=".5" width="14" height="14" fill="#e4f2fa" stroke="#63a5cf" /><path d="M3.500 2.500h5l3 3v7h-8z" fill="#fff" stroke="#7f95b5" /></svg>
    )
}

function SubsectionWindow() {
    return (
        <section className={`absolute top-[145px] left-[78px] isolate flex h-[545px] w-[910px] flex-col border border-[#666] bg-[#c3c9da] text-[11px] leading-4 text-black shadow-[0_4px_16px_rgba(0,0,0,0.5)] ${segoe}`}>
            <div className="flex h-[29px] shrink-0 items-center bg-white pl-2">
                <AppIcon />
                <span className="pl-[5px]">SIM-193-NFDN01__.KOS &gt; Subsections1: 2H.00</span>
                <span className="pl-7">47 085,02</span>
                <div className="ml-auto flex items-center gap-[35px] pr-[18px]">
                    <svg width="10" height="10"><path d="M0 5.500h10" stroke="#000" /></svg>
                    <svg width="10" height="10"><rect x=".5" y=".5" width="9" height="9" fill="none" stroke="#000" /></svg>
                    <svg width="10" height="10"><path d="M0 0l10 10M10 0L0 10" stroke="#000" /></svg>
                </div>
            </div>
            <nav className="flex h-[23px] shrink-0 items-center bg-gradient-to-r from-[#b9b9b9] via-[#e4e4e4] to-[#bebebe] text-[#000066]">
                <Grip />
                <button className="mr-2 ml-px h-[22px] w-[41px] border border-b-0 border-[#888] bg-[#c4c4c4] text-center">Datei</button>
                {["Bearbeiten", "Werkzeuge", "Internet", "Ansicht", "Hilfe"].map((item) => <button key={item} className="mr-[15px]">{item}</button>)}
            </nav>
            <div className="flex h-[25px] shrink-0 items-start gap-1">
                <ToolStrip width="w-[366px]" className="justify-end">
                    {["undo", "redo", "cut", "copy", "paste", "|", "edit", "gridx"].map((n) => <ToolButton key={n} name={n} />)}
                </ToolStrip>
                <ToolStrip width="w-[305px]">
                    {["up", "down", "|", "jump", "list12", "|", "pinkTop", "pinkBottom", "boxx", "|", "sheet", "|", "sort", "funnel", "|", "gear"].map((n, i) => <ToolButton key={i} name={n} />)}
                </ToolStrip>
            </div>
            <div className="flex h-[25px] shrink-0 items-start gap-1">
                <ToolStrip width="w-[265px]" className="justify-end pr-6">
                    {["docplus", "xplus"].map((n) => <ToolButton key={n} name={n} />)}
                </ToolStrip>
                <ToolStrip width="w-[323px]">
                    <ToolButton name="back" />
                    <ToolButton name="forward" />
                    <div className="mx-0.5 flex h-[19px] flex-1 bg-white">
                        <input aria-label="Suche" className="min-w-0 flex-1" />
                        <span className="flex w-[15px] items-center justify-center bg-[#dfe1ee]"><svg width="6" height="4"><path d="M0 0h6L3 4z" fill="#000066" /></svg></span>
                    </div>
                    {["play", "refresh", "redx", "home"].map((n) => <ToolButton key={n} name={n} />)}
                </ToolStrip>
            </div>
            <div className="min-h-0 flex-1 overflow-hidden border-t border-[#777] bg-white">
                <table className="w-0 table-fixed border-separate border-spacing-0">
                    <thead>
                        <tr className="h-[25px]">
                            {subsectionColumns.map(([label, width], i) => (
                                <th key={i} className={`border-r border-[#ddd] p-0 font-normal whitespace-nowrap ${width} ${label === "Description" ? "pl-4" : ""}`}>{label}</th>
                            ))}
                        </tr>
                    </thead>
                    <tbody>
                        {subsections.map(([code, name], i) => (
                            <tr key={code} className={`h-[19px] *:overflow-hidden *:border-r *:border-[#dfe9ee] *:p-0 *:whitespace-nowrap ${i % 2 ? "bg-[#e4f0f7]" : "bg-[#eff6fa]"}`}>
                                <td><input type="checkbox" aria-label={code} className="ml-[11px] block size-[13px] appearance-none border border-[#2d5f99] bg-[#f4f4f4]" /></td>
                                <td><span className="pl-0.5">{code}</span></td>
                                <td><span className="flex items-center gap-[5px]"><CellPlus />{name}</span></td>
                                <td><span className="pl-1">PA</span></td>
                                <td><span className="flex items-center justify-between pl-0.5 text-[#000080]"><CellPlus />1,00</span></td>
                                <td><span className="flex items-center justify-between"><CellPage />0,00</span></td>
                                <td className="text-right">0,00</td>
                                <td className="text-right">0,00</td>
                                <td className="text-right">0,00</td>
                                <td className="text-right">0,00</td>
                                <td className="text-right">0,00</td>
                                <td><span className="flex items-center justify-between"><CellPage />3 005,00</span></td>
                                <td className="text-right">0,00</td>
                                <td className="text-right">0,00</td>
                            </tr>
                        ))}
                        {Array.from({ length: 12 }, (_, i) => (
                            <tr key={i} className="h-[19px] *:border-r *:border-b *:border-[#e8e8e8]">
                                {subsectionColumns.map((_, k) => <td key={k} className="p-0" />)}
                            </tr>
                        ))}
                    </tbody>
                </table>
            </div>
            <div className="flex h-[17px] shrink-0 items-center bg-[#f0f0f0]">
                <span className="flex w-[18px] justify-center"><Chevron dir="left" size={9} /></span>
                <div className="h-[15px] w-[189px] bg-[#cdcdcd]" />
            </div>
            <div className="h-[26px] shrink-0 border-t-2 border-[#6b7590] bg-gradient-to-b from-[#dbe0ec] to-[#a9b2cf]" />
            <FileMenu />
        </section>
    )
}

/* ---------- open dialog ---------- */

function ScrollY({ top, thumb }: { top: string, thumb: string }) {
    return (
        <div className="flex w-4 shrink-0 flex-col items-center bg-[#f0f0f0]">
            <div className="flex h-[17px] items-center"><Chevron dir="up" size={8} /></div>
            <div className={`w-[15px] bg-[#cdcdcd] ${top} ${thumb}`} />
            <div className="mt-auto flex h-[17px] items-center"><Chevron dir="down" size={8} /></div>
        </div>
    )
}

function OpenDialog() {
    const folders = ["01 HON", "DATEN", "intern", "XX-Zusammenfassungen"]
    const places = [["cube", "3D-Objekte"], ["image", "Bilder"], ["desktop", "Desktop"], ["doc", "Dokumente"], ["download", "Downloads"], ["music", "Musik"], ["video", "Videos"], ["net", "Bibliothek (B:)"], ["disk", "Lokaler Datenträger (C:)"], ["net", "SIMUR-TTB (D:)"]]
    return (
        <section className={`absolute top-[297px] left-[295px] isolate flex h-[533px] w-[812px] flex-col border border-[#555] bg-white text-[11px] leading-4 text-black ${segoe}`}>
            <div className="flex h-9 shrink-0 items-center pb-1 pl-[9px]">
                <AppIcon />
                <span className="pl-[5px]">Datei öffnen</span>
                <svg width="11" height="11" className="mr-2.5 ml-auto"><path d="M0 0l11 11M11 0L0 11" stroke="#000" /></svg>
            </div>
            <div className="flex h-[30px] shrink-0 pr-3">
                <div className="flex w-[107px] items-center gap-[17px] pl-3">
                    <svg width="13" height="11"><path d="M13 5.500H1M6 .5L1 5.500l5 5" fill="none" stroke="#ccc" strokeWidth="1.500" /></svg>
                    <svg width="13" height="11"><path d="M0 5.500h12M7 .5l5 5-5 5" fill="none" stroke="#ccc" strokeWidth="1.500" /></svg>
                    <div className="flex items-center gap-2">
                        <Chevron dir="down" size={7} color="#bbb" />
                        <svg width="12" height="12"><path d="M6 12V1M1 6l5-5 5 5" fill="none" stroke="#555" strokeWidth="1.600" /></svg>
                    </div>
                </div>
                <div className="flex w-[444px] items-center border border-[#0078d7] pl-1">
                    <FolderIcon />
                    <div className="flex-1 pl-[5px]"><span className="bg-[#0078d7] text-white">C:\valerio-gks\ORG\DATEN</span></div>
                    <button aria-label="Verlauf" className="mr-2.5"><Chevron dir="down" size={9} weight={1.5} /></button>
                </div>
                <button aria-label="Aktualisieren" className="mr-3 flex w-[34px] items-center justify-center border border-l-0 border-[#d9d9d9]">
                    <svg width="11" height="12" viewBox="0 0 11 12"><path d="M7.500 2.500a4 4 0 11-5 .5M7 0v3.500h3.500" fill="none" stroke="#666" strokeWidth="1.500" /></svg>
                </button>
                <div className="flex flex-1 items-center gap-3 border border-[#d9d9d9] pl-3.5">
                    <svg width="13" height="13" viewBox="0 0 13 13"><circle cx="8" cy="5" r="4" fill="none" stroke="#888" /><path d="M5 8L1 12" stroke="#888" /></svg>
                    <input aria-label="Durchsuchen" placeholder={'"DATEN" durchsuchen'} className="min-w-0 flex-1 placeholder:text-[#6d6d6d]" />
                </div>
            </div>
            <div className="mt-1.5 flex h-[31px] shrink-0 items-center border-b border-[#e3e3e3] bg-[#f5f6f7] pl-[18px] text-[#1e395b]">
                <button className="mr-[30px] flex items-center gap-1.5">Organisieren<svg width="8" height="5"><path d="M0 0h8L4 5z" fill="#1e395b" /></svg></button>
                <button>Neuer Ordner</button>
                <div className="ml-auto flex items-center pr-[15px]">
                    <svg width="16" height="12" viewBox="0 0 16 12"><path d="M.5.5h4v11h-4zM.5 4h4M.5 8h4" fill="none" stroke="#888" /><path d="M6 2h4M11.500 2h4M6 6h4M11.500 6h4M6 10h4M11.500 10h4" stroke="#666" /></svg>
                    <svg width="8" height="5" className="mr-[22px] ml-2.5"><path d="M0 0h8L4 5z" fill="#1e395b" /></svg>
                    <svg width="16" height="12" viewBox="0 0 16 12" className="mr-5"><rect x=".5" y=".5" width="15" height="11" fill="#fff" stroke="#666" /><path d="M0 1h16" stroke="#555" strokeWidth="2" /><path d="M5 2v10" stroke="#888" /><path d="M9.500 2.500h5.500v8.500H9.500z" fill="#3d9be9" /></svg>
                    <span className="flex size-4 items-center justify-center rounded-full bg-[#0a64c0] font-bold text-white">?</span>
                </div>
            </div>
            <div className="flex h-[352px] shrink-0">
                <div className="w-[206px] shrink-0 overflow-hidden">
                    {folders.map((name) => (
                        <div key={name} className="flex h-6 items-center gap-1.5 pl-[33px]"><TreeIcon name="folder" />{name}</div>
                    ))}
                    <div className="mt-2 flex h-6 items-center gap-[5px] pl-6"><TreeIcon name="pc" />Dieser PC</div>
                    {places.map(([icon, name]) => (
                        <div key={name} className={`flex h-6 items-center gap-[5px] pl-8 ${icon === "disk" ? "bg-[#d9d9d9]" : ""}`}><TreeIcon name={icon} />{name}</div>
                    ))}
                </div>
                <ScrollY top="mt-16" thumb="h-[173px]" />
                <div className="ml-1 flex min-w-0 flex-1 flex-col">
                    <div className="flex min-h-0 flex-1">
                        <div className="flex min-w-0 flex-1 flex-col overflow-hidden">
                            <div className="z-10 flex h-[25px] shrink-0 items-center bg-white pt-1 text-[#4c607a]">
                                <span className="relative h-full w-[273px] shrink-0 border-r border-[#e0e0e0] pl-[18px]">Name<span className="absolute -top-1.5 left-[139px]"><Chevron dir="up" size={8} weight={1} /></span></span>
                                <span className="h-full w-[144px] shrink-0 border-r border-[#e0e0e0] pl-1.5">Änderungsdatum</span>
                                <span className="h-full w-[120px] shrink-0 border-r border-[#e0e0e0] pl-1.5">Typ</span>
                                <span className="h-full shrink-0 pl-1.5">Größe</span>
                            </div>
                            <table className="-mt-1.5 ml-[15px] w-0 table-fixed border-collapse">
                                <tbody>
                                    {files.map((file) => (
                                        <tr key={file.name} className={`h-[21px] *:p-0 *:whitespace-nowrap ${file.name === "GKS-2019-10.TGW" ? "bg-[#d9d9d9]" : ""}`}>
                                            <td className="w-[264px]"><span className="flex items-center gap-[5px] pl-1.5"><FileIcon image={file.name.endsWith(".bmp")} />{file.name}</span></td>
                                            <td className="w-[144px] text-[#6d6d6d]">{file.date}</td>
                                            <td className="w-[100px] text-[#6d6d6d]">{file.type}</td>
                                            <td className="w-[60px] text-[#6d6d6d]"><span className="pl-[41px]">{file.size}</span></td>
                                        </tr>
                                    ))}
                                </tbody>
                            </table>
                        </div>
                        <ScrollY top="mt-[123px]" thumb="h-[83px]" />
                    </div>
                    <div className="flex h-4 shrink-0 items-center">
                        <div className="flex h-full flex-1 items-center bg-[#f0f0f0]">
                            <span className="flex w-[18px] justify-center"><Chevron dir="left" size={8} /></span>
                            <div className="h-[15px] w-[481px] bg-[#cdcdcd]" />
                            <span className="ml-auto flex w-[18px] justify-center"><Chevron dir="right" size={8} /></span>
                        </div>
                        <div className="w-4" />
                    </div>
                </div>
            </div>
            <div className="flex flex-1 flex-col gap-1.5 bg-[#f0f0f0] pt-[9px] pr-[18px]">
                <div className="flex h-6 items-center">
                    <label htmlFor="filename" className="w-[190px] text-right">Dateiname:</label>
                    <div className="mr-3 ml-[5px] flex h-6 flex-1 items-center border border-[#7a7a7a] bg-white pr-1">
                        <input id="filename" defaultValue="GKS-2019-10.TGW" className="min-w-0 flex-1 pl-[3px]" />
                        <Chevron dir="down" size={9} weight={1.3} />
                    </div>
                    <div className="relative w-[188px]">
                        <select aria-label="Dateityp" className="h-[23px] w-full appearance-none border border-[#adadad] bg-[#e1e1e1] pl-[3px]"><option>Alle Dateien (*.*)</option></select>
                        <span className="pointer-events-none absolute top-[7px] right-1"><Chevron dir="down" size={9} weight={1.3} /></span>
                    </div>
                </div>
                <div className="flex justify-end gap-3.5">
                    <button className="h-6 w-[86px] border-2 border-[#0078d7] bg-[#e1e1e1]">Öffnen</button>
                    <button className="h-6 w-[86px] border border-[#adadad] bg-[#e1e1e1]">Abbrechen</button>
                </div>
            </div>
            <svg width="9" height="9" viewBox="0 0 9 9" className="absolute right-0.5 bottom-0.5"><path d="M7 1h2M4 4h2M7 4h2M1 7h2M4 7h2M7 7h2" stroke="#b0b0b0" strokeWidth="2" /></svg>
        </section>
    )
}

/* ---------- callouts ---------- */

function Callouts() {
    const text = "absolute font-['Open_Sans',sans-serif] text-[20px] leading-[29px] font-bold whitespace-nowrap text-[#ed1c24]"
    return (
        <>
            <svg width="200" height="61" viewBox="0 0 200 61" className="absolute top-[168px] left-[85px]">
                <path d="M2.500 2.500h55v22h139v33H2.500z" fill="none" stroke="#ed1c24" strokeWidth="5" />
            </svg>
            <svg width="14" height="20" viewBox="0 0 14 20" className="absolute top-[213px] left-[204px]">
                <path d="M.5.5v15l3.500-3 2.500 6 2.500-1-2.500-6h5z" fill="#fff" stroke="#000" />
            </svg>
            <p className={`${text} top-[187px] left-[301px]`}>2. Datenbank öffen</p>
            <div className="absolute top-[367px] left-[403px] h-[5px] w-[175px] rounded-full bg-[#ed1c24]" />
            <div className="absolute top-[560px] left-[531px] h-9 w-[139px] border-5 border-[#ed1c24]" />
            <p className={`${text} top-[542px] left-[681px]`}>3. TGW Bibliothek<br />auswählen</p>
            <p className={`${text} top-[761px] left-[1171px]`}>1. TGW Kostenstelle öffnen</p>
            <div className="absolute top-[972px] left-[1118px] h-11 w-[41px] border-5 border-[#ed1c24]" />
        </>
    )
}

function Backdrop() {
    return (
        <div className="flex min-h-screen flex-col bg-white">
            <div className="h-[23px]" />
            <div className="h-[23px] bg-[#c4c4c4]" />
            <div className="h-[26px] bg-[#b5b5cf]" />
            <div className="flex flex-1 justify-between">
                <div className="flex w-2 flex-col">
                    <div className="h-12 bg-[#6f8f1f]" />
                    <div className="h-[148px] bg-[#3c423c]" />
                    <div className="h-12 bg-[#ececec]" />
                    <div className="flex-1 bg-[#3c423c]" />
                </div>
                <div className="flex w-2 flex-col bg-[#e4e4e4]">
                    <div className="h-[70px] bg-[#6f8f1f]" />
                    <div className="h-[520px]" />
                    <div className="h-[86px] bg-[#b4b4b4]" />
                </div>
            </div>
            <div className="flex h-6 justify-end border-t border-[#888] bg-gradient-to-b from-[#d4d9e6] to-[#aab3cd]">
                <div className="w-[229px] border-l border-[#7d86a0] pl-1.5">
                    <div className="h-5 w-[70px] rounded border border-[#999] bg-[#dcdcdc]" />
                </div>
            </div>
        </div>
    )
}

export default function App() {
    return (
        <main className="relative min-h-screen overflow-hidden">
            <Backdrop />
            <CostDetails />
            <SubsectionWindow />
            <OpenDialog />
            <Callouts />
        </main>
    )
}
